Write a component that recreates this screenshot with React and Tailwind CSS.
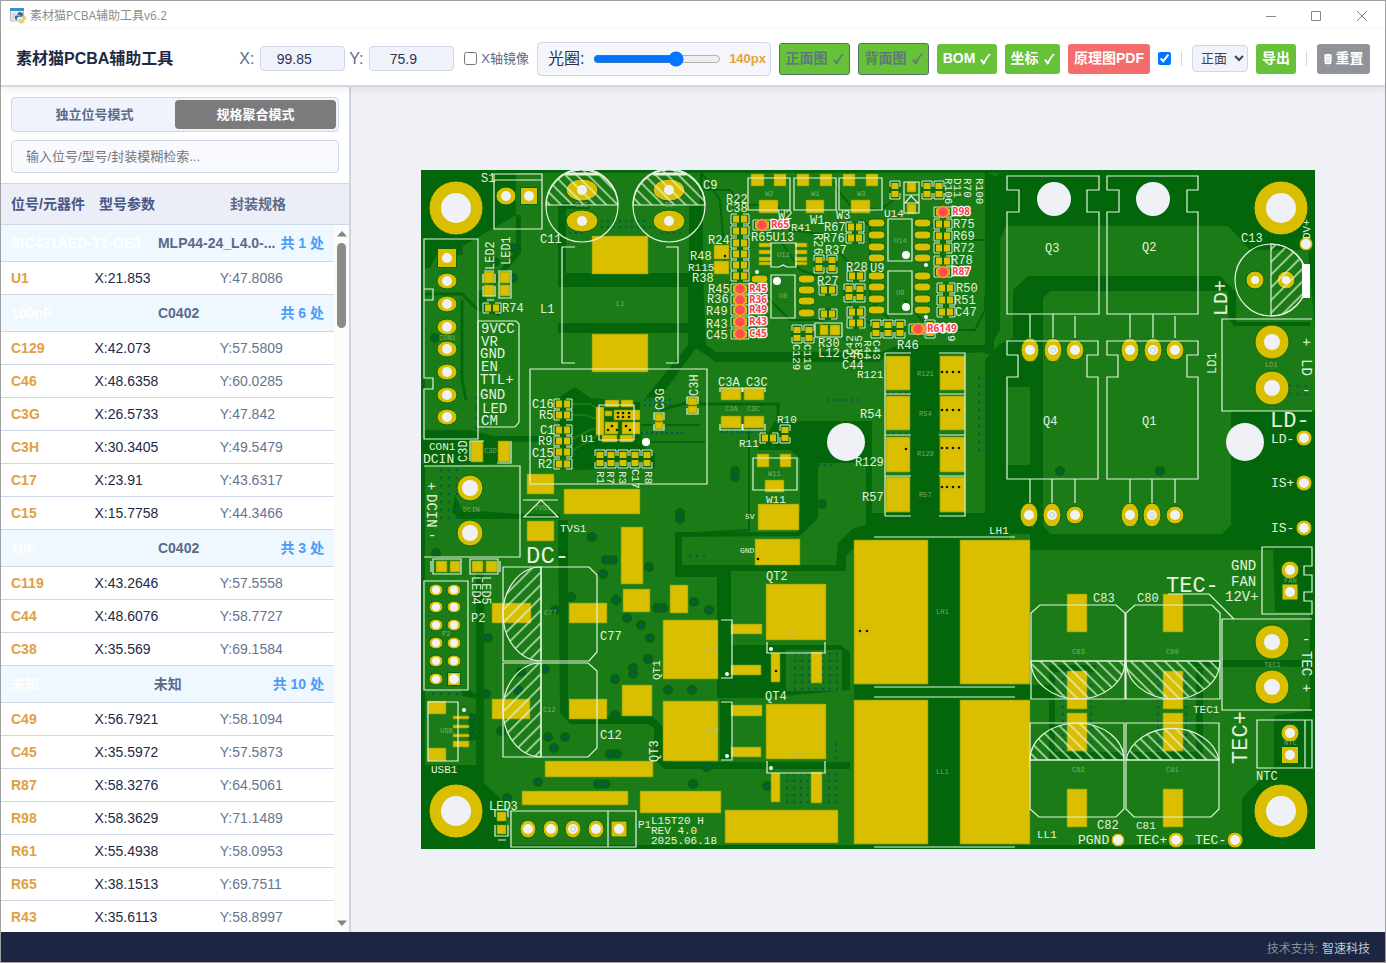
import React, { useState } from 'react';

const groups = [
  {
    name: 'SIC431AED-T1-GE3',
    spec: 'MLP44-24_L4.0-...',
    count: 1,
    parts: [['U1', '21.853', '47.8086']],
  },
  {
    name: '100nF',
    spec: 'C0402',
    count: 6,
    parts: [
      ['C129', '42.073', '57.5809'],
      ['C46', '48.6358', '60.0285'],
      ['C3G', '26.5733', '47.842'],
      ['C3H', '30.3405', '49.5479'],
      ['C17', '23.91', '43.6317'],
      ['C15', '15.7758', '44.3466'],
    ],
  },
  {
    name: '1nF',
    spec: 'C0402',
    count: 3,
    parts: [
      ['C119', '43.2646', '57.5558'],
      ['C44', '48.6076', '58.7727'],
      ['C38', '35.569', '69.1584'],
    ],
  },
  {
    name: '未知',
    spec: '未知',
    count: 10,
    parts: [
      ['C49', '56.7921', '58.1094'],
      ['C45', '35.5972', '57.5873'],
      ['R87', '58.3276', '64.5061'],
      ['R98', '58.3629', '71.1489'],
      ['R61', '55.4938', '58.0953'],
      ['R65', '38.1513', '69.7511'],
      ['R43', '35.6113', '58.8997'],
    ],
  },
];

/* ---------- Board data ---------- */

const DARK = '#04660a';
const LIGHT = '#1b7c17';
const PAD = '#d9bf00';
const SILK = '#e4f3dc';
const HOLE = '#eff1f7';
const VIA = '#0b5560';

// clearances between the copper pours
const darkAreas = [
  '421,170 516,170 516,215 463,246 463,255 436,256 430,268 424,268 421,440',
  '421,170 1315,170 1315,173 421,173',
  '421,170 425,170 425,849 421,849',
  '421,845 1315,845 1315,849 421,849',
  '558,203 590,203 590,209 566,209 566,273 689,273 689,205 700,205 706,345 716,352 882,352 898,345 985,345 985,352 938,355 938,520 1010,520 1010,540 862,540 910,518 910,356 885,356 880,362 716,362 696,348 660,398 645,398 688,345 688,333 558,333 558,323 688,323 688,287 558,287 558,273',
  '775,421 872,421 872,513 1010,513 1010,540 862,540 846,556 846,571 731,571 731,695 717,695 717,577 675,577 675,532 797,532 800,510 800,458 790,450 757,450',
  '700,170 703,170 703,345 697,345',
  '985,172 1006,180 1006,226 1000,240 1000,330 988,350 985,350',
  '1000,172 1315,172 1315,330 1308,250 1250,250 1228,226 1000,226 994,330 994,354 985,354 985,190',
  '1028,276 1220,276 1236,292 1236,322 1310,322 1310,326 1234,326 1228,318 1228,291 1050,291 1043,298 1043,525 1050,534 1222,534 1231,525 1231,411 1315,411 1315,550 1030,550 1030,534 985,534 985,360 1000,344 1013,338 1013,290',
  '928,540 960,540 960,849 928,849',
  '854,685 1050,685 1050,700 854,700',
  '910,353 939,353 939,518 910,518',
  '558,520 568,520 568,700 578,716 652,716 664,728 664,752 672,762 850,762 850,769 664,769 654,758 654,728 648,724 570,724 560,712',
  '476,560 484,568 484,783 500,798 512,849 421,849 421,765 476,765',
  '425,690 470,690 484,700 484,765 482,765 482,700 462,696 462,690',
  '717,645 840,645 850,652 850,690 760,698 717,698',
  '720,700 733,700 733,760 720,760',
  '1190,660 1312,660 1312,667 1190,667',
  '1049,665 1096,665 1096,672 1055,672 1055,752 1196,752 1196,668 1203,668 1203,759 1049,759',
  '1310,550 1315,550 1315,849 1310,849',
  '1242,798 1274,766 1274,716 1312,710 1312,849 1242,849',
  '1273,550 1310,550 1310,612 1275,612',
  '558,398 575,387 590,398 640,402 642,445 655,454 655,468 575,470 558,440',
  '425,430 470,430 494,436 560,436 560,442 500,442 500,464 425,466',
  '455,495 462,510 520,514 560,514 560,519 460,519 452,512',
  '478,290 484,290 516,250 516,215 521,215 521,253 486,295 486,304 500,310 500,316 478,310',
];

const lightAreas = [
  '568,288 688,288 688,322 568,322',
  '1007,387 1030,387 1030,465 1007,465',
  '786,650 842,650 842,691 786,691',
  '818,463 866,463 866,525 852,529 838,543 836,565 682,565 682,537 800,536 818,518',
  '688,538 765,538 765,558 688,558',
];

// traces [points, width, colour]
const traces = [
  ['422,294 462,294 478,310 500,310', 3, DARK],
  ['462,300 462,380 466,400', 3, DARK],
  ['700,190 730,190 742,205 760,205', 2, DARK],
  ['775,200 790,230 830,235 850,220', 2, DARK],
  ['830,180 850,205 880,210 900,195', 2, DARK],
  ['760,290 790,320 820,320 860,350', 2, DARK],
  ['838,250 850,265 850,310 880,330', 2, DARK],
  ['860,220 870,225 870,300 890,320', 2, DARK],
  ['925,220 950,240 985,240', 2, DARK],
  ['905,300 930,330 975,330 985,310 985,295', 2, DARK],
  ['570,404 590,404 600,410', 2, LIGHT],
  ['570,415 585,415 600,420', 2, LIGHT],
  ['570,440 590,430 600,428', 2, LIGHT],
  ['570,452 590,440 600,434', 2, LIGHT],
  ['635,425 700,425', 2, DARK],
  ['645,442 705,442', 2, DARK],
  ['660,410 690,402 706,404', 3, DARK],
  ['700,404 778,404 778,420', 3, DARK],
  ['678,534 749,530 749,420', 2, DARK],
  ['700,170 720,200 725,260 735,280', 2, DARK],
  ['780,240 800,270 830,280', 2, DARK],
];

// rectangular pads [x, y, w, h]
const pads = [
  [592, 236, 56, 38], [592, 334, 56, 38],
  [564, 489, 76, 25], [621, 527, 22, 57], [623, 589, 27, 23], [670, 585, 18, 28],
  [622, 685, 30, 31], [545, 761, 108, 16], [522, 791, 106, 14], [640, 791, 81, 22], [725, 810, 113, 33],
  [527, 474, 27, 20], [527, 521, 27, 20],
  [492, 603, 39, 20], [569, 603, 38, 20], [492, 699, 38, 20], [569, 699, 38, 20],
  [758, 504, 41, 26], [755, 539, 45, 26],
  [757, 454, 12, 13], [780, 454, 11, 13], [765, 480, 19, 12],
  [854, 540, 74, 144], [960, 540, 70, 144], [854, 700, 74, 144], [960, 700, 70, 144],
  [766, 584, 60, 56], [766, 704, 60, 55], [663, 620, 55, 59], [663, 701, 55, 60],
  [731, 624, 31, 10], [731, 665, 30, 10], [731, 705, 31, 11], [731, 747, 30, 10],
  [771, 653, 9, 29], [811, 652, 11, 31], [771, 773, 9, 29], [811, 772, 11, 31],
  [886, 356, 24, 34], [886, 396, 24, 34], [886, 437, 24, 35], [886, 477, 24, 35],
  [940, 356, 25, 34], [940, 396, 25, 34], [940, 437, 25, 35], [940, 477, 25, 35],
  [1067, 594, 20, 38], [1067, 671, 20, 38], [1067, 713, 20, 38], [1067, 789, 20, 38],
  [1163, 594, 20, 38], [1163, 671, 20, 38], [1163, 713, 20, 38], [1163, 789, 20, 38],
  [751, 174, 13, 12], [774, 174, 12, 12], [759, 200, 19, 13],
  [797, 174, 12, 12], [820, 174, 12, 12], [806, 200, 18, 13],
  [843, 174, 12, 12], [866, 174, 12, 12], [851, 200, 19, 13],
  [714, 245, 15, 14], [714, 261, 15, 13],
  [428, 701, 18, 13], [428, 748, 18, 13],
  [453, 716, 16, 3], [453, 725, 16, 3], [453, 734, 16, 3], [453, 741, 16, 6],
  [484, 272, 10, 11], [484, 285, 10, 11], [500, 272, 10, 11], [500, 285, 10, 11],
  [436, 561, 11, 11], [450, 561, 10, 11], [472, 561, 11, 11], [486, 561, 11, 11],
  [497, 812, 9, 9], [497, 825, 9, 9],
  [907, 182, 9, 10], [907, 204, 9, 10],
  [721, 388, 20, 12], [744, 388, 20, 12], [721, 416, 20, 12], [744, 416, 20, 12],
  [471, 441, 12, 21], [498, 441, 12, 21],
  [655, 414, 8, 7], [655, 422, 8, 7], [688, 398, 9, 7], [688, 406, 9, 7],
  [759, 243, 12, 4], [759, 250, 12, 4], [759, 257, 12, 4], [759, 262, 12, 3],
  [795, 243, 12, 4], [795, 250, 12, 4], [795, 257, 12, 4], [795, 262, 12, 3],
  [820, 325, 8, 10], [830, 325, 10, 10],
  // U1 package
  [596, 407, 8, 28], [605, 400, 14, 7], [621, 400, 12, 7], [605, 411, 7, 5], [614, 410, 26, 10],
  [605, 422, 13, 12], [622, 422, 18, 12], [602, 435, 15, 7], [620, 435, 13, 7],
];

// two-terminal chips: centre x, centre y, vertical flag
const chips = [
  [563, 404], [563, 415], [563, 430], [563, 441], [563, 452], [563, 464],
  [600, 459, 1], [611, 459, 1], [623, 459, 1], [635, 459, 1], [647, 459, 1],
  [740, 219], [740, 231], [740, 243], [740, 254], [740, 265], [740, 276],
  [492, 308], [762, 225], [855, 227], [855, 238], [943, 224], [943, 236], [943, 248], [943, 261],
  [819, 264, 1], [832, 264, 1], [856, 276], [828, 290], [828, 314], [849, 293, 1], [860, 293, 1],
  [856, 312], [856, 323], [946, 288], [946, 300], [946, 312],
  [895, 190, 1], [927, 190, 1], [939, 190, 1],
  [797, 334, 1], [809, 334, 1], [876, 329, 1], [888, 329, 1], [900, 329, 1], [930, 329, 1],
  [769, 438], [785, 434, 1], [740, 289], [740, 300], [740, 310], [740, 322], [740, 334],
  [943, 212], [943, 272], [918, 329],
];

// drilled pads: x, y, rx, ry, hole radius
const drills = [
  [456, 208, 27, 27, 15], [1281, 208, 27, 27, 15], [456, 811, 27, 27, 15], [1281, 811, 27, 27, 15],
  [470, 488, 13, 13, 8], [470, 533, 13, 13, 8],
  [1272, 342, 17, 17, 8], [1272, 388, 17, 17, 8], [1272, 642, 17, 17, 8], [1272, 687, 17, 17, 8],
  [582, 190, 16, 11, 5], [582, 221, 16, 11, 5], [669, 190, 16, 11, 5], [669, 221, 16, 11, 5],
  [447, 281, 10, 8, 5], [447, 304, 10, 8, 5], [447, 327, 10, 8, 5], [447, 349, 10, 8, 5],
  [447, 372, 10, 8, 5], [447, 395, 10, 8, 5], [447, 417, 10, 8, 5],
  [506, 196, 10, 9, 5], [528, 829, 8, 9, 5], [551, 829, 8, 9, 5], [573, 829, 8, 9, 5], [596, 829, 8, 9, 5],
  [436, 590, 7, 6, 4], [454, 590, 7, 6, 4], [436, 607, 7, 6, 4], [454, 607, 7, 6, 4],
  [436, 625, 7, 6, 4], [454, 625, 7, 6, 4], [436, 643, 7, 6, 4], [454, 643, 7, 6, 4],
  [436, 661, 7, 6, 4], [454, 661, 7, 6, 4], [436, 679, 7, 6, 4],
  [1030, 350, 9, 12, 5], [1053, 350, 9, 12, 5], [1075, 350, 9, 10, 5],
  [1130, 350, 9, 12, 5], [1153, 350, 9, 12, 5], [1175, 350, 9, 10, 5],
  [1029, 515, 9, 12, 5], [1052, 515, 9, 12, 5], [1075, 515, 9, 9, 5],
  [1130, 515, 9, 12, 5], [1152, 515, 9, 12, 5], [1175, 515, 9, 9, 5],
  [1255, 280, 9, 9, 4], [1286, 280, 9, 9, 4], [1306, 244, 7, 7, 5],
  [1304, 438, 8, 8, 5], [1304, 483, 8, 8, 5], [1304, 528, 8, 8, 5],
  [1290, 570, 9, 9, 5], [1290, 733, 9, 9, 5],
  [1118, 840, 7, 7, 5], [1176, 840, 8, 8, 5], [1235, 840, 8, 8, 5],
];

const squareDrills = [[447, 258, 19], [529, 196, 17], [619, 829, 16], [454, 679, 13], [1290, 592, 16], [1290, 755, 17]];

const ovals = [
  [877, 223], [877, 235], [877, 247], [877, 258], [923, 223], [923, 235], [923, 247], [923, 258],
  [877, 276], [877, 287], [877, 299], [877, 310], [923, 276], [923, 287], [923, 299], [923, 310],
  [760, 279], [807, 279], [807, 290], [807, 301], [807, 313],
];

const vias = [
  [592, 537], [606, 560], [613, 560], [649, 567], [603, 574], [571, 597], [616, 600], [627, 618],
  [641, 625], [657, 608], [663, 608], [694, 602], [709, 610], [555, 610], [650, 638], [648, 659],
  [633, 668], [633, 674], [615, 679], [668, 690], [692, 690], [545, 669], [521, 672], [488, 638],
  [486, 694], [518, 690], [615, 715], [548, 737], [565, 737], [554, 748], [610, 754], [617, 754],
  [538, 782], [598, 784], [605, 784], [693, 784], [707, 767], [501, 731], [680, 513], [680, 519],
  [735, 471], [735, 477], [822, 504], [507, 798], [472, 718], [472, 727], [472, 736],
  [513, 248], [495, 262], [513, 278], [767, 786], [435, 338], [436, 553], [1060, 471], [1160, 471],
];

// grids of tiny via dots: x, y, columns, rows, step
const dotGrids = [
  [602, 221, 8, 1, 6], [602, 227, 14, 1, 6], [570, 233, 3, 1, 6], [662, 233, 4, 1, 6],
  [795, 654, 7, 6, 7], [787, 774, 8, 5, 7], [441, 470, 3, 7, 8], [476, 398, 2, 6, 10],
  [979, 378, 2, 10, 8], [1063, 672, 1, 12, 7], [1091, 672, 1, 12, 7], [1158, 672, 1, 12, 7], [1186, 672, 1, 12, 7],
  [645, 400, 6, 2, 5], [642, 433, 9, 1, 5], [690, 556, 3, 1, 7], [819, 465, 3, 1, 6],
  [828, 400, 6, 1, 6], [888, 393, 4, 1, 6], [888, 434, 4, 1, 6], [1290, 386, 3, 2, 8],
  [722, 432, 7, 1, 5], [433, 694, 4, 1, 8], [836, 744, 1, 3, 7],
];

const blackDots = [
  [942, 372], [947, 372], [953, 372], [959, 372], [942, 410], [947, 410], [953, 410], [959, 410],
  [942, 448], [947, 448], [953, 448], [959, 448], [942, 487], [947, 487], [953, 487], [959, 487],
  [906, 449], [758, 559], [725, 256], [776, 671], [860, 631], [867, 631],
  [618, 413], [623, 413], [629, 413], [618, 417], [623, 417], [629, 417],
  [612, 426], [608, 430], [617, 430], [626, 426], [630, 430],
];

const silkPaths = [
  'M494 174H542V229H494ZM494 180H542',
  'M424 239H478V439H424V389H433V378H424ZM424 300H433V289H424',
  'M478 321H516L519 324V422L515 427H478Z',
  'M575 247H562V363H575M666 247H678V363H666',
  'M530 369H707V484H530Z',
  'M424 466H520V557H424M523 500H558M541 500L524 517H558Z',
  'M424 581H468V690H424ZM428 702H458V761H428Z',
  'M503 567H589L597 575V652L589 661H503ZM503 663H588L597 671V748L588 757H503ZM541 567V661M541 663V757',
  'M511 811H636V847H511ZM608 811V847',
  'M748 178H790V210H748ZM794 178H836V210H794ZM839 178H882V210H839Z',
  'M771 243H796V267H787L783 265L779 267H771ZM771 275H795V318H771Z',
  'M888 219H912V261H888ZM888 271H912V314H888Z',
  'M815 323H842V337H815Z',
  'M599 405H634V440H599Z',
  'M753 458H797V490H753Z',
  'M885 353H911M885 394H911M885 435H911M885 476H911M885 516H911M885 353V516M939 353H965V516H939M939 394H965M939 435H965M939 476H965',
  'M874 537H1015M874 687H1015M874 697H1015M874 847H1015',
  'M721 620H732V678H721M721 702H732V760H721M767 642V653H825V642M767 761V773H825V761',
  'M1007 176H1099V190H1087V212H1099V314H1007V212H1019V190H1007ZM1107 176H1198V190H1187V212H1198V314H1107V212H1119V190H1107Z',
  'M1007 341H1098V355H1087V377H1098V479H1007V377H1018V355H1007ZM1107 341H1198V355H1187V377H1198V479H1107V377H1118V355H1107Z',
  'M1030 314V338M1053 314V338M1075 316V338M1130 314V338M1153 314V338M1175 316V338M1030 479V503M1052 479V503M1075 479V503M1130 479V503M1152 479V503M1175 479V503',
  'M1312 319H1222V411H1312M1312 619H1222V710H1312',
  'M1262 547H1312V566H1304V575H1312V592H1304V601H1312V614H1262ZM1257 720H1312V768H1257ZM1305 720V768',
  'M1031 699V613L1040 605H1116L1125 613V699ZM1126 699V613L1135 605H1212L1220 613V699ZM1031 661H1125M1126 661H1220',
  'M1030 723V809L1039 817H1116L1124 809V723ZM1126 723V809L1134 817H1211L1219 809V723ZM1030 760H1124M1126 760H1219',
  'M1168 594H1209L1234 619',
  'M484 271H494M483 274V283M495 274V283M483 286V296H495V286M499 271H511V298H499ZM487 300H494',
  'M433 559H461V574H433ZM470 559H498V574H470ZM431 561V572M500 561V572',
  'M720 392V388H742V392M743 392V388H765V392M720 424V430H742V424M743 424V430H765V424',
  'M470 461V441H484M511 441V463H497',
  'M904 182H919V213H904ZM905 203L911 196L918 203ZM905 195H918',
  'M654 420V413H664V420M654 424V430H664V424M687 404V397H698V404M687 408V414H698V408',
  'M495 817V810H508V817M495 825V836H508V825M498 840H506',
];

const silkDots = [
  [646, 442, 4], [906, 255, 4], [906, 307, 4], [777, 281, 4], [757, 272, 2], [926, 265, 2],
  [926, 317, 2], [727, 674, 2], [727, 756, 2], [771, 649, 2], [771, 768, 2], [464, 710, 2],
];

// silkscreen text: x, baseline, text, size, rotation
const labels = [
  [481, 182, 'S1', 12], [703, 189, 'C9', 12], [540, 243, 'C11', 12], [540, 313, 'L1', 12],
  [502, 312, 'R74', 12], [481, 333, '9VCC', 14], [481, 346, 'VR', 14], [480, 358, 'GND', 14],
  [481, 371, 'EN', 14], [480, 384, 'TTL+', 14], [480, 399, 'GND', 14], [482, 413, 'LED', 14], [481, 425, 'CM', 14],
  [429, 450, 'CON1', 11], [423, 463, 'DCIN', 13], [532, 408, 'C16', 12], [539, 419, 'R5', 12],
  [540, 434, 'C1', 12], [538, 445, 'R9', 12], [532, 457, 'C15', 12], [538, 468, 'R2', 12],
  [581, 442, 'U1', 11], [560, 532, 'TVS1', 11], [526, 563, 'DC-', 24], [471, 622, 'P2', 12],
  [600, 640, 'C77', 12], [600, 739, 'C12', 12], [431, 773, 'USB1', 11], [489, 810, 'LED3', 12],
  [638, 828, 'P1', 11], [651, 824, 'L15T20 H', 11], [651, 834, 'REV 4.0', 11], [651, 844, '2025.06.18', 11],
  [766, 580, 'QT2', 12], [765, 700, 'QT4', 12], [989, 534, 'LH1', 11], [1037, 838, 'LL1', 11],
  [745, 519, '5V', 8], [740, 553, 'GND', 8], [766, 503, 'W11', 11], [777, 423, 'R10', 11], [739, 447, 'R11', 11],
  [718, 386, 'C3A', 12], [746, 386, 'C3C', 12],
  [857, 378, 'R121', 11], [860, 418, 'R54', 12], [855, 466, 'R129', 12], [862, 501, 'R57', 12],
  [726, 203, 'R22', 12], [726, 212, 'C38', 12], [708, 244, 'R24', 12], [690, 260, 'R48', 12],
  [688, 271, 'R115', 11], [692, 282, 'R38', 12], [708, 293, 'R45', 12], [707, 303, 'R36', 12],
  [706, 315, 'R49', 12], [706, 328, 'R43', 12], [706, 339, 'C45', 12], [778, 219, 'W2', 12],
  [810, 224, 'W1', 12], [836, 219, 'W3', 12], [791, 231, 'R41', 11], [751, 241, 'R65U13', 12],
  [824, 231, 'R67', 12], [823, 242, 'R76', 12], [825, 254, 'R37', 12], [846, 271, 'R28', 12],
  [870, 272, 'U9', 12], [884, 217, 'U14', 11], [817, 285, 'R27', 12], [818, 347, 'R30', 12], [818, 357, 'L12', 12],
  [897, 349, 'R46', 12], [953, 228, 'R75', 12], [953, 240, 'R69', 12], [953, 252, 'R72', 12],
  [951, 264, 'R78', 12], [956, 292, 'R50', 12], [954, 304, 'R51', 12], [955, 316, 'C47', 12],
  [842, 359, 'C46', 12], [842, 369, 'C44', 12],
  [1045, 252, 'Q3', 12], [1142, 251, 'Q2', 12], [1043, 425, 'Q4', 12], [1142, 425, 'Q1', 12],
  [1241, 242, 'C13', 12], [1270, 427, 'LD-', 22], [1271, 443, 'LD-', 13], [1271, 487, 'IS+', 13], [1271, 532, 'IS-', 13],
  [1231, 570, 'GND', 14], [1231, 586, 'FAN', 14], [1225, 601, '12V+', 14], [1166, 592, 'TEC-', 22],
  [1093, 602, 'C83', 12], [1137, 602, 'C80', 12], [1193, 713, 'TEC1', 11], [1097, 829, 'C82', 12],
  [1136, 829, 'C81', 11], [1256, 780, 'NTC', 12], [1078, 844, 'PGND', 13], [1136, 844, 'TEC+', 13], [1195, 844, 'TEC-', 13],
  [494, 270, 'LED2', 12, -90], [510, 265, 'LED1', 12, -90], [664, 410, 'C3G', 12, -90], [698, 396, 'C3H', 12, -90],
  [467, 462, 'C3D', 12, -90], [660, 680, 'QT1', 11, -90], [658, 762, 'QT3', 12, -90],
  [1227, 316, 'LD+', 20, -90], [1216, 374, 'LD1', 12, -90], [1310, 239, 'DV+', 11, -90], [1247, 764, 'TEC+', 22, -90],
  [853, 355, 'C42', 11, -90], [862, 355, 'R35', 11, -90],
  [427, 482, '+', 14, 90], [427, 494, 'DCIN', 14, 90], [428, 540, '-', 14], [472, 576, 'LED4', 12, 90], [482, 576, 'LED5', 12, 90],
  [597, 471, 'R1', 11, 90], [607, 471, 'R7', 11, 90], [619, 471, 'R3', 11, 90], [632, 469, 'C17', 11, 90],
  [645, 471, 'R8', 11, 90], [793, 344, 'C129', 11, 90], [804, 344, 'C119', 11, 90], [814, 233, 'R26', 12, 90],
  [864, 340, 'R44', 11, 90], [873, 340, 'C43', 11, 90], [945, 178, 'R106', 11, 90], [954, 178, 'D11', 11, 90],
  [964, 178, 'R70', 11, 90], [976, 178, 'R100', 11, 90], [948, 335, '9', 11, 90],
  [1302, 338, '+', 14, 90], [1302, 359, 'LD', 14, 90], [1302, 395, '-', 14],
  [1302, 644, '-', 14], [1302, 651, 'TEC', 14, 90], [1302, 684, '+', 14, 90],
];

const faintLabels = [
  [616, 306, 'L1'], [439, 340, 'CON1'], [575, 207, 'C11'], [665, 207, 'C9'], [484, 453, 'C3D'], [463, 512, 'DCIN'],
  [534, 510, 'TVS1'], [544, 615, 'C77'], [543, 712, 'C12'], [440, 733, 'USB'], [442, 636, 'P2'],
  [706, 652, 'QT1'], [706, 733, 'QT3'], [790, 636, 'QT2'], [789, 756, 'QT4'], [936, 614, 'LH1'], [936, 774, 'LL1'],
  [917, 376, 'R121'], [919, 416, 'R54'], [917, 456, 'R129'], [919, 497, 'R57'], [768, 476, 'W11'],
  [765, 196, 'W2'], [811, 196, 'W1'], [857, 196, 'W3'], [777, 257, 'U13'], [779, 298, 'U8'], [894, 243, 'U14'],
  [896, 295, 'U9'], [725, 411, 'C3A'], [747, 411, 'C3C'], [1072, 654, 'C83'], [1166, 654, 'C80'],
  [1072, 772, 'C82'], [1166, 772, 'C81'], [1265, 367, 'LD1'], [1264, 667, 'TEC1'], [1284, 583, 'FAN'], [1284, 745, 'NTC'],
];

const marks = [
  ['C49', 930, 329], ['R61', 918, 329], ['R65', 762, 225], ['R98', 943, 212], ['R87', 943, 272],
  ['R45', 740, 289], ['R36', 740, 300], ['R49', 740, 310], ['R43', 740, 322], ['C45', 740, 334],
];

function Chip({ x, y, vertical }) {
  return (
    <g transform={`translate(${x} ${y}) rotate(${vertical ? 90 : 0})`}>
      <rect x="-10" y="-6" width="20" height="12" fill={DARK} opacity="0.6" />
      <rect x="-7" y="-3.5" width="6" height="7" fill={PAD} />
      <rect x="1" y="-3.5" width="6" height="7" fill={PAD} />
      <path d="M-3 -5H-9V5H-3M3 -5H9V5H3" fill="none" stroke={SILK} />
    </g>
  );
}

function Board() {
  return (
    <svg
      viewBox="421 170 894 679"
      role="img"
      aria-label="PCB 正面图"
      className="block w-full font-['Liberation_Mono',monospace]"
    >
      <defs>
        <pattern id="hatch" width="8" height="8" patternUnits="userSpaceOnUse" patternTransform="rotate(-45)">
          <path d="M4 0V8" stroke={SILK} strokeWidth="1.3" />
        </pattern>
        <pattern id="hatchUp" width="9" height="9" patternUnits="userSpaceOnUse" patternTransform="rotate(45)">
          <path d="M4 0V9" stroke={SILK} strokeWidth="1.3" />
        </pattern>
      </defs>

      {/* Copper */}
      <rect x="421" y="170" width="894" height="679" fill={LIGHT} />
      {darkAreas.map((points, i) => (
        <polygon key={i} points={points} fill={DARK} />
      ))}
      {lightAreas.map((points, i) => (
        <polygon key={i} points={points} fill={LIGHT} />
      ))}
      {traces.map(([points, width, color], i) => (
        <polyline key={i} points={points} fill="none" stroke={color} strokeWidth={width} />
      ))}
      {vias.map(([x, y], i) => (
        <g key={i}>
          <circle cx={x} cy={y} r="5" fill={DARK} />
          <circle cx={x} cy={y} r="2" fill={VIA} />
        </g>
      ))}
      {dotGrids.map(([x, y, cols, rows, step], i) => (
        <g key={i} fill={VIA}>
          {Array.from({ length: cols * rows }, (_, n) => (
            <circle key={n} cx={x + (n % cols) * step} cy={y + Math.floor(n / cols) * step} r="1.2" />
          ))}
        </g>
      ))}

      {/* Pads */}
      {pads.map(([x, y, w, h], i) => (
        <rect key={i} x={x} y={y} width={w} height={h} fill={PAD} stroke="#6f9a0a" strokeWidth="0.6" />
      ))}
      {ovals.map(([x, y], i) => (
        <rect key={i} x={x - 9} y={y - 4} width="17" height="8" rx="4" fill={PAD} stroke={DARK} />
      ))}
      {chips.map(([x, y, vertical], i) => (
        <Chip key={i} x={x} y={y} vertical={vertical} />
      ))}
      {squareDrills.map(([x, y, size], i) => (
        <rect key={i} x={x - size / 2} y={y - size / 2} width={size} height={size} fill={PAD} stroke={DARK} />
      ))}
      {drills.map(([x, y, rx, ry], i) => (
        <ellipse key={i} cx={x} cy={y} rx={rx} ry={ry} fill={PAD} stroke={DARK} />
      ))}
      {blackDots.map(([x, y], i) => (
        <circle key={i} cx={x} cy={y} r="1.3" fill="#101800" />
      ))}

      {/* Silkscreen */}
      <g fill="none" stroke={SILK} strokeWidth="1.2">
        {silkPaths.map((d, i) => (
          <path key={i} d={d} />
        ))}
        <circle cx="582" cy="206" r="36" />
        <circle cx="669" cy="206" r="36" />
        <path d="M546 205A36 36 0 0 1 618 205Z" fill="url(#hatch)" />
        <path d="M633 205A36 36 0 0 1 705 205Z" fill="url(#hatch)" />
        <path d="M566 174H599M653 174H686" strokeWidth="3" />
        <circle cx="1271" cy="280" r="36" />
        <path d="M1271 244A36 36 0 0 1 1271 316Z" fill="url(#hatchUp)" />
        <path d="M541 567A38 47 0 0 0 541 661Z" fill="url(#hatchUp)" />
        <path d="M541 663A38 47 0 0 0 541 757Z" fill="url(#hatchUp)" />
        <path d="M1031 661A47 38 0 0 0 1125 661Z" fill="url(#hatch)" />
        <path d="M1126 661A47 38 0 0 0 1220 661Z" fill="url(#hatch)" />
        <path d="M1030 760A47 37 0 0 1 1124 760Z" fill="url(#hatch)" />
        <path d="M1126 760A47 37 0 0 1 1219 760Z" fill="url(#hatch)" />
      </g>
      <rect x="1302" y="264" width="8" height="34" fill="#fff" />
      {silkDots.map(([x, y, r], i) => (
        <circle key={i} cx={x} cy={y} r={r} fill="#fff" />
      ))}
      {labels.map(([x, y, text, size, angle], i) => (
        <text
          key={i}
          fill={SILK}
          fontSize={size}
          transform={`translate(${x} ${y}) rotate(${angle || 0})`}
        >
          {text}
        </text>
      ))}
      {faintLabels.map(([x, y, text], i) => (
        <text key={i} x={x} y={y} fill="#a5c48c" fontSize="7" opacity="0.7">{text}</text>
      ))}

      {/* Holes */}
      {drills.map(([x, y, , , r], i) => (
        <circle key={i} cx={x} cy={y} r={r} fill={HOLE} />
      ))}
      {squareDrills.map(([x, y], i) => (
        <circle key={i} cx={x} cy={y} r="5" fill={HOLE} />
      ))}
      {[[1052, 515], [1152, 515], [1053, 350], [1153, 350], [573, 829]].map(([x, y], i) => (
        <circle key={i} cx={x} cy={y} r="2.5" fill="none" stroke="#a9cba5" strokeWidth="0.7" />
      ))}
      <circle cx="1054" cy="199" r="17" fill={HOLE} />
      <circle cx="1153" cy="199" r="17" fill={HOLE} />
      <circle cx="846" cy="442" r="19" fill={HOLE} />
      <circle cx="1245" cy="442" r="19" fill={HOLE} />

      {/* Highlighted parts */}
      <g className="font-['Open_Sans',sans-serif] font-bold" fontSize="10">
        {marks.map(([name, x, y]) => (
          <g key={name}>
            <circle cx={x} cy={y} r="5.5" fill="#ff4d55" stroke="#ffa31a" strokeWidth="1.5" />
            <text x={x + 9} y={y + 3} fill="#f5424f" stroke="#fff" strokeWidth="2.5" paintOrder="stroke">
              {name}
            </text>
          </g>
        ))}
      </g>
    </svg>
  );
}

function TitleBar() {
  return (
    <div className="flex h-[29px] shrink-0 items-center bg-white pl-[9px] text-[12px] text-[#8c8c8c]">
      <svg viewBox="0 0 16 16" className="mr-1 size-4" aria-hidden="true">
        <path d="M.5 1h13v12H.5z" fill="#e7eef5" stroke="#a7b8c9" />
        <path d="M0 0h14v3H0z" fill="#3d8fc4" />
        <path d="M2 6h4M2 8h3M2 10h2" stroke="#b4c3d0" />
        <path d="M10 4c-2 0-2.500 1-2.500 2v1h3v.6H6C4.500 7.600 4.500 12 6.500 12H7v-1.500c0-1 .8-1.700 1.800-1.700h2.400c1 0 1.600-.7 1.600-1.600V6c0-1.300-1-2-2.800-2z" fill="#35688f" />
        <path d="M12 15.500c2 0 2.500-1 2.500-2v-1h-3v-.5H15c1.500 0 1.500-3.800 0-4.200h-1v1.400c0 1-.8 1.700-1.700 1.700h-2c-1 0-1.500.7-1.500 1.500v1.300c0 1.200 1.200 1.800 3.200 1.800z" fill="#f7d454" />
      </svg>
      <span className="flex-1 font-['Open_Sans','Noto_Sans_CJK_SC',sans-serif]">素材猫PCBA辅助工具v6.2</span>
      <div className="flex">
        <button aria-label="最小化" className="flex h-7 w-[45px] items-center justify-center">
          <svg viewBox="0 0 12 12" className="size-3"><path d="M1 6.500h10" stroke="#888" /></svg>
        </button>
        <button aria-label="最大化" className="flex h-7 w-[45px] items-center justify-center">
          <svg viewBox="0 0 12 12" className="size-3"><path d="M1.500 1.500h9v9h-9z" fill="none" stroke="#888" /></svg>
        </button>
        <button aria-label="关闭" className="flex h-7 w-[47px] items-center justify-center">
          <svg viewBox="0 0 12 12" className="size-3"><path d="M1 1l10 10M11 1L1 11" stroke="#888" /></svg>
        </button>
      </div>
    </div>
  );
}

function Check() {
  return (
    <svg viewBox="0 0 12 14" className="h-[14px] w-[12px]" aria-hidden="true">
      <path d="M1 8L3 7.200 4.600 9.600C6.200 6.600 8 4 10 2L12 2C9 5 7 8.400 5.400 12.400L3.800 12.400C3.200 10.600 2.400 9 1 8z" fill="currentColor" />
    </svg>
  );
}

function Toolbar() {
  const [radius, setRadius] = useState(140);
  const [mirror, setMirror] = useState(false);
  const [showPdf, setShowPdf] = useState(true);
  const [x, setX] = useState('99.85');
  const [y, setY] = useState('75.9');

  const field = 'h-[25px] w-[85px] rounded border border-[#cfd8e8] bg-[#f0f3fb] pr-[17px] text-center text-[14px] text-[#2a3452]';
  const base = 'flex shrink-0 items-center justify-center gap-[4px] rounded-[3px] text-[14px] font-bold';

  return (
    <header className="relative flex h-[57px] shrink-0 items-center border-b-2 border-[#d0d8e5] bg-white px-[15px] pt-[2px] shadow-[0_2px_8px_rgba(0,0,0,0.08)]">
      <h1 className="flex-1 whitespace-nowrap text-[16px] font-bold text-[#1e2a45]">素材猫PCBA辅助工具</h1>

      <div className="flex items-center gap-2">
        <div className="flex items-center gap-1 text-[16px] text-[#5c6a8a]">
          <label htmlFor="pos-x" className="w-[17px]">X:</label>
          <input id="pos-x" value={x} onChange={(e) => setX(e.target.value)} className={field} />
          <label htmlFor="pos-y" className="w-[16px]">Y:</label>
          <input id="pos-y" value={y} onChange={(e) => setY(e.target.value)} className={field} />
        </div>

        <label className="ml-[2px] flex items-center gap-1 whitespace-nowrap text-[13px] text-[#5c6a8a]">
          <input type="checkbox" checked={mirror} onChange={(e) => setMirror(e.target.checked)} className="size-[13px]" />
          X轴镜像
        </label>

        <div className="flex h-[34px] w-[234px] items-center rounded border border-[#cfd8e8] bg-[#f4f6fb] pl-[10px] pr-1">
          <label htmlFor="radius" className="w-[45px] whitespace-nowrap text-[16px] text-[#2a3452]">光圈:</label>
          <input
            id="radius"
            type="range"
            min="20"
            max="200"
            value={radius}
            onChange={(e) => setRadius(Number(e.target.value))}
            className="w-[128px]"
          />
          <span className="flex-1 text-right text-[13px] font-bold text-[#e6a23c]">{radius}px</span>
        </div>

        <button className={`${base} h-8 w-[71px] border border-[#55736a] bg-[#67c23a] text-[#5c7a78]`}>正面图<Check /></button>
        <button className={`${base} h-8 w-[71px] border border-[#55736a] bg-[#67c23a] text-[#5c7a78]`}>背面图<Check /></button>
        <button className={`${base} h-[30px] w-[60px] bg-[#67c23a] text-white`}>BOM<Check /></button>
        <button className={`${base} h-[30px] w-[55px] bg-[#67c23a] text-white`}>坐标<Check /></button>
        <button className={`${base} h-[30px] w-[82px] bg-[#f56c6c] text-white`}>原理图PDF</button>
        <input
          type="checkbox"
          aria-label="显示原理图"
          checked={showPdf}
          onChange={(e) => setShowPdf(e.target.checked)}
          className="size-[13px]"
        />
        <span className="mx-[2px] h-[15px] w-px bg-[#d3d8e2]" />
        <select aria-label="板面" className="h-[27px] w-[56px] rounded border border-[#cfd8e8] bg-[#f0f3fb] pl-1 text-[13px] text-[#444]">
          <option>正面</option>
          <option>背面</option>
        </select>
        <button className={`${base} h-[30px] w-[40px] bg-[#67c23a] text-white`}>导出</button>
        <span className="mx-[2px] h-[15px] w-px bg-[#d3d8e2]" />
        <button className={`${base} h-[30px] w-[53px] bg-[#909399] text-white`}>
          <svg viewBox="0 0 8 12" className="h-3 w-2" aria-hidden="true">
            <path d="M.3 2.200C.3.600 7.700.600 7.700 2.200L7.300 10.500C7 11.600 1 11.600.7 10.500z" fill="currentColor" />
            <path d="M1.300 3.300h5.400M3 5v5M5 5v5" stroke="#b9bbc0" strokeWidth=".6" />
          </svg>
          重置
        </button>
      </div>
    </header>
  );
}

function PartList() {
  return (
    <table className="relative flex min-h-0 flex-1 flex-col text-[14px]">
      <thead className="block shrink-0">
        <tr className="flex h-[42px] items-center border-y border-[#cfd8e8] bg-[#ebeef7] px-[10px] text-left text-[#465780]">
          <th className="w-[88px] whitespace-nowrap">位号/元器件</th>
          <th className="flex-1">型号参数</th>
          <th className="w-[162px] text-center text-[#5c6a8a]">封装规格</th>
        </tr>
      </thead>
      <tbody className="mr-[15px] block min-h-0 flex-1 overflow-hidden">
        {groups.map((group) => (
          <React.Fragment key={group.name}>
            <tr className="flex h-[37px] items-center border-b border-[#cfd8e8] bg-[#eff7ff] px-[10px] font-bold">
              <td className="min-w-0 flex-[6] whitespace-nowrap text-white">{group.name}</td>
              <td className="min-w-0 flex-[5] whitespace-nowrap text-[#5c6a8a]">{group.spec}</td>
              <td className="whitespace-nowrap text-[#4b9cf5]">共 {group.count} 处</td>
            </tr>
            {group.parts.map(([name, px, py]) => (
              <tr key={name} className="flex h-[33px] items-center border-b border-[#cfd8e8] bg-white px-[10px]">
                <td className="flex-[4] font-bold text-[#e0a043]">{name}</td>
                <td className="flex-[6] text-[#1e2a45]">X:{px}</td>
                <td className="flex-[5] text-[#67748f]">Y:{py}</td>
              </tr>
            ))}
          </React.Fragment>
        ))}
      </tbody>
    </table>
  );
}

function Sidebar() {
  return (
    <aside className="flex w-[350px] shrink-0 flex-col border-r-2 border-[#cdd5e3] bg-white">
      <div className="flex flex-col gap-2 px-[10px] pt-[10px] pb-[10px]">
        <div className="flex h-[35px] rounded border border-[#cfd8e8] bg-[#f0f3fb] p-[2px] text-[13px] font-bold">
          <button className="flex-1 rounded text-[#5c6a8a]">独立位号模式</button>
          <button className="flex-1 rounded bg-[#7b7b7b] text-white">规格聚合模式</button>
        </div>
        <input
          aria-label="检索"
          placeholder="输入位号/型号/封装模糊检索..."
          className="h-[33px] rounded border border-[#cfd8e8] bg-[#f8faff] px-[14px] text-[13px] placeholder:text-[#777]"
        />
      </div>
      <div className="relative flex min-h-0 flex-1 flex-col">
        <PartList />
        {/* Scroll bar */}
        <div className="absolute top-[42px] right-0 bottom-0 flex w-[15px] flex-col items-center bg-[#fcfcfc] py-[6px]">
          <svg viewBox="0 0 10 6" className="h-[6px] w-[10px]"><path d="M0 5.500L5 0l5 5.500z" fill="#858585" /></svg>
          <div className="mt-[6px] h-[85px] w-[9px] rounded-full bg-[#8b8b8b]" />
          <svg viewBox="0 0 10 6" className="mt-auto h-[6px] w-[10px]"><path d="M0 .5L5 6l5-5.500z" fill="#858585" /></svg>
        </div>
      </div>
    </aside>
  );
}

export default function App() {
  return (
    <div className="flex h-screen flex-col border border-[#a0a0a0] bg-white font-['Liberation_Sans','Noto_Sans_CJK_SC',sans-serif]">
      <TitleBar />
      <Toolbar />
      <div className="flex min-h-0 flex-1">
        <Sidebar />
        <main className="flex min-w-0 flex-1 items-center justify-center bg-[#eff1f7] px-[70px]">
          <div className="w-full">
            <Board />
          </div>
        </main>
      </div>
      <footer className="flex h-[30px] shrink-0 items-center justify-end gap-1 bg-[#1c2541] px-[15px] pt-[3px] text-[12px] text-[#8a8f9c]">
        <span>技术支持:</span>
        <a href="#support" className="text-[#c3c7d1]">智速科技</a>
      </footer>
    </div>
  );
}
